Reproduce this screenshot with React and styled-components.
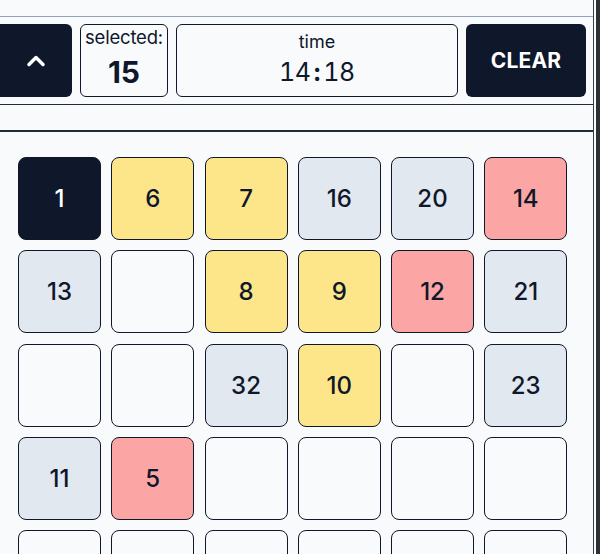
import React from 'react'
import styled, { createGlobalStyle } from 'styled-components'
import { ChevronUp } from 'lucide-react'

const GlobalStyle = createGlobalStyle`
  html, body {
    margin: 0;
    padding: 0;
    background: #f8fafc;
    font-family: Inter, "Noto Sans", sans-serif;
    color: #0f172a;
  }
`

const COLORS = {
  dark: { bg: '#0f172a', fg: '#ffffff' },
  yellow: { bg: '#fde68a', fg: '#0f172a' },
  gray: { bg: '#e2e8f0', fg: '#0f172a' },
  red: { bg: '#fca5a5', fg: '#0f172a' },
  empty: { bg: '#f8fafc', fg: '#0f172a' },
}

const cells = [
  [1, 'dark'], [6, 'yellow'], [7, 'yellow'], [16, 'gray'], [20, 'gray'], [14, 'red'],
  [13, 'gray'], [null, 'empty'], [8, 'yellow'], [9, 'yellow'], [12, 'red'], [21, 'gray'],
  [null, 'empty'], [null, 'empty'], [32, 'gray'], [10, 'yellow'], [null, 'empty'], [23, 'gray'],
  [11, 'gray'], [5, 'red'], [null, 'empty'], [null, 'empty'], [null, 'empty'], [null, 'empty'],
  [null, 'empty'], [null, 'empty'], [null, 'empty'], [null, 'empty'], [null, 'empty'], [null, 'empty'],
]

export default function App() {
  return (
    <>
      <GlobalStyle />
      <Frame>
        <Main>
          <TopStrip />
          <Toolbar>
            <UpButton>
              <ChevronUp size={28} strokeWidth={3} />
            </UpButton>
            <Stat>
              <StatLabel>selected:</StatLabel>
              <StatValue>15</StatValue>
            </Stat>
            <TimeBox>
              <TimeLabel>time</TimeLabel>
              <TimeValue>14<Colon>:</Colon>18</TimeValue>
            </TimeBox>
            <ClearButton>CLEAR</ClearButton>
          </Toolbar>
          <Band />
          <Board>
            {cells.map(([n, kind], i) => (
              <Cell key={i} $kind={kind}>{n}</Cell>
            ))}
          </Board>
        </Main>
        <Edge />
      </Frame>
    </>
  )
}

const Frame = styled.div`
  display: flex;
  height: 554px;
  overflow: hidden;
  background: #f8fafc;
`

const Main = styled.div`
  width: 593px;
  flex: none;
  border-right: 1px solid #334155;
  display: flex;
  flex-direction: column;
`

const Edge = styled.div`
  margin-left: 2px;
  flex: 1;
  background: #2f3033;
`

const TopStrip = styled.div`
  height: 16px;
  border-bottom: 1px solid #94a3b8;
  flex: none;
`

const Toolbar = styled.div`
  display: flex;
  align-items: stretch;
  gap: 8px;
  padding: 7px 7px 7px 0;
  height: 73px;
  border-bottom: 1px solid #1e293b;
  flex: none;
`

const UpButton = styled.button`
  width: 72px;
  flex: none;
  border: none;
  border-radius: 0 6px 6px 0;
  background: #0f172a;
  color: #fff;
  display: flex;
  align-items: center;
  justify-content: center;
  padding: 0;
`

const Stat = styled.div`
  width: 86px;
  flex: none;
  border: 1px solid #0f172a;
  border-radius: 6px;
  display: flex;
  flex-direction: column;
  align-items: center;
  overflow: hidden;
`

const StatLabel = styled.div`
  font-size: 18.5px;
  line-height: 22px;
  margin-top: 1px;
  letter-spacing: -0.2px;
  white-space: nowrap;
`

const StatValue = styled.div`
  font-size: 30px;
  font-weight: 700;
  line-height: 34px;
  margin-top: 7px;
`

const TimeBox = styled.div`
  flex: 1;
  border: 1px solid #0f172a;
  border-radius: 6px;
  display: flex;
  flex-direction: column;
  align-items: center;
`

const TimeLabel = styled.div`
  font-size: 18px;
  line-height: 22px;
  margin-top: 6px;
`

const TimeValue = styled.div`
  font-size: 25px;
  line-height: 30px;
  margin-top: 4px;
  font-variant-numeric: tabular-nums;
  letter-spacing: -0.3px;
`

const Colon = styled.span`
  font-weight: 700;
  margin: 0 3px;
`

const ClearButton = styled.button`
  width: 120px;
  flex: none;
  border: none;
  border-radius: 6px;
  background: #0f172a;
  color: #fff;
  font-family: Inter, "Noto Sans", sans-serif;
  font-size: 21px;
  font-weight: 700;
  letter-spacing: 0.2px;
`

const Band = styled.div`
  height: 25px;
  border-bottom: 2px solid #1e293b;
  flex: none;
`

const Board = styled.div`
  display: grid;
  grid-template-columns: repeat(6, 83px);
  grid-auto-rows: 83px;
  gap: 10.25px;
  padding: 25px 0 0 18px;
`

const Cell = styled.div`
  box-sizing: border-box;
  border: 1px solid #0f172a;
  border-radius: 8px;
  background: ${({ $kind }) => COLORS[$kind].bg};
  color: ${({ $kind }) => COLORS[$kind].fg};
  display: flex;
  align-items: center;
  justify-content: center;
  font-size: 24px;
  font-weight: 500;
`
